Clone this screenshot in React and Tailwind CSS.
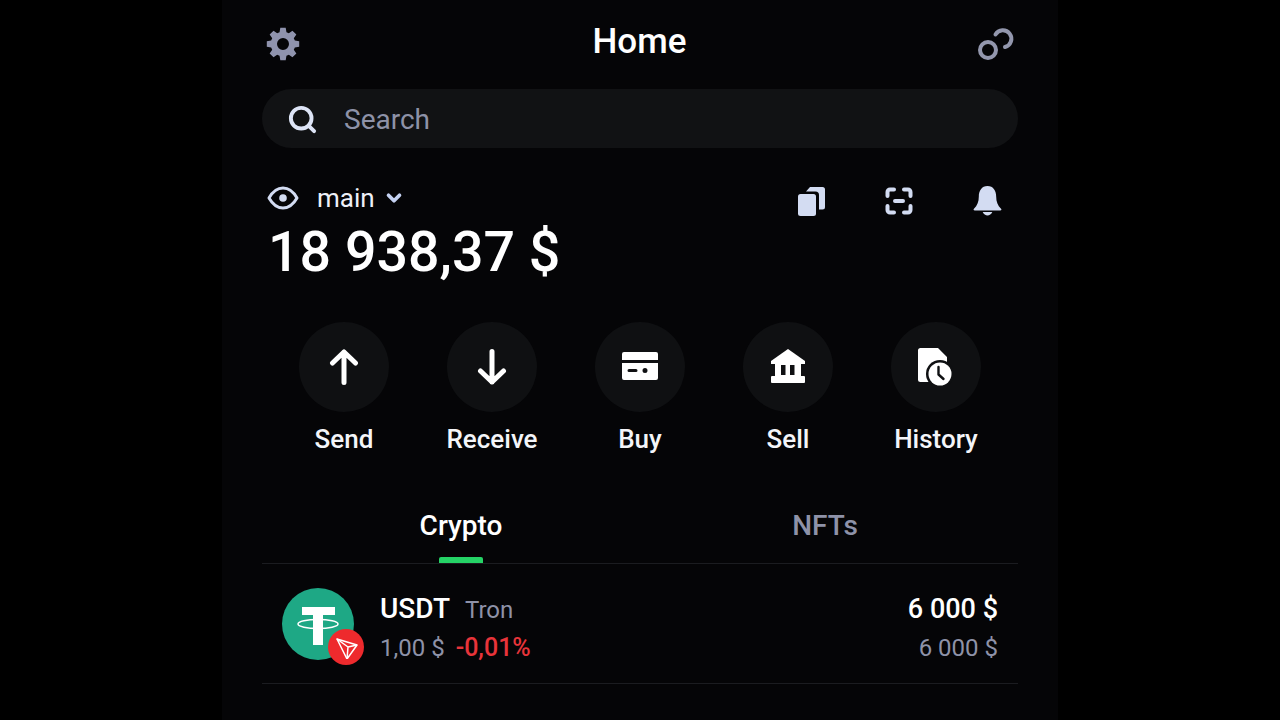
import React from "react";
import { Search, ChevronDown } from "lucide-react";

const font = { fontFamily: "Roboto, sans-serif" };

const GearIcon = () => (
  <svg width="36" height="36" viewBox="0 0 24 24" fill="#8f93ad">
    <path
      fillRule="evenodd"
      d="M10.2 1.200h3.600l.5 2.900 1.600.7 2.400-1.700 2.600 2.600-1.700 2.400.7 1.600 2.900.5v3.600l-2.900.5-.7 1.600 1.700 2.400-2.600 2.600-2.400-1.700-1.600.7-.5 2.900h-3.600l-.5-2.900-1.600-.7-2.400 1.700-2.600-2.600 1.700-2.400-.7-1.600-2.900-.5v-3.600l2.900-.5.7-1.600-1.700-2.400 2.600-2.600 2.400 1.700 1.600-.7zM12 8a4 4 0 1 0 0 8 4 4 0 0 0 0-8z"
    />
  </svg>
);

const LinkIcon = () => (
  <svg width="37" height="34" viewBox="0 0 37 34" fill="none" stroke="#9397ad" strokeWidth="4">
    <circle cx="10" cy="23" r="8" />
    <path d="M17.500 7.500A8.500 8.500 0 1 1 27 20" strokeLinecap="round" />
  </svg>
);

const EyeIcon = () => (
  <svg width="32" height="24" viewBox="0 0 32 24" fill="none" stroke="#d3dcf2" strokeWidth="3">
    <path d="M2 12C6 5 10 2 16 2s10 3 14 10c-4 7-8 10-14 10S6 19 2 12z" strokeLinejoin="round" />
    <circle cx="16" cy="12" r="3.800" fill="#d3dcf2" stroke="none" />
  </svg>
);

const CopyIcon = () => (
  <svg width="27" height="30" viewBox="0 0 27 30" fill="#d3dcf2">
    <rect x="0" y="8" width="18" height="22" rx="2.500" />
    <path d="M8 5.500 12 1h12.500A2.500 2.500 0 0 1 27 3.500v17.500a2.500 2.500 0 0 1-2.500 2.500H21V9a3.500 3.500 0 0 0-3.500-3.500z" />
  </svg>
);

const ScanIcon = () => (
  <svg width="28" height="28" viewBox="0 0 28 28" fill="none" stroke="#d3dcf2" strokeWidth="4" strokeLinecap="round" strokeLinejoin="round">
    <path d="M9 2.500H5A2.500 2.500 0 0 0 2.500 5v4M19 2.500h4A2.500 2.500 0 0 1 25.500 5v4M9 25.500H5A2.500 2.500 0 0 1 2.500 23v-4M19 25.500h4a2.500 2.500 0 0 0 2.500-2.500v-4M10 14h8" />
  </svg>
);

const BellIcon = () => (
  <svg width="29" height="31" viewBox="0 0 30 32" fill="#d3dcf2">
    <path d="M15 1C9 1 6 6 6 12c0 5-1.500 9-5 12.500-.8.8-.3 1.800.8 1.800h26.400c1.100 0 1.600-1 .8-1.800C25.500 21 24 17 24 12c0-6-3-11-9-11z" />
    <path d="M10 28h10c-1 2.500-3 3.500-5 3.500S11 30.500 10 28z" />
  </svg>
);

const UpIcon = () => (
  <svg width="30" height="38" viewBox="0 0 30 38" fill="none" stroke="#fff" strokeWidth="5" strokeLinecap="round" strokeLinejoin="round">
    <path d="M15 34.500V4M3.500 15 15 4l11.500 11" />
  </svg>
);

const DownIcon = () => (
  <svg width="30" height="38" viewBox="0 0 30 38" fill="none" stroke="#fff" strokeWidth="5" strokeLinecap="round" strokeLinejoin="round">
    <path d="M15 3.500V34M3.500 23 15 34l11.500-11" />
  </svg>
);

const CardIcon = () => (
  <svg width="38" height="30" viewBox="0 0 38 30" fill="#fff">
    <path d="M3 0h32a2 2 0 0 1 2 2v6H1V2a2 2 0 0 1 2-2z" />
    <path
      fillRule="evenodd"
      d="M1 11h36v15a2 2 0 0 1-2 2H3a2 2 0 0 1-2-2zm7 6a1.500 1.500 0 0 0 0 3h7a1.500 1.500 0 0 0 0-3zm16-1a2.500 2.500 0 1 0 0 5 2.500 2.500 0 0 0 0-5z"
    />
  </svg>
);

const BankIcon = () => (
  <svg width="36" height="36" viewBox="0 0 36 36" fill="#fff">
    <path d="M18 0 35 12v3H1v-3z" />
    <path fillRule="evenodd" d="M5 15h26v12H5zm6 1v10h4.500V16zm9 0v10h4.500V16z" />
    <rect x="1" y="27" width="34" height="7" rx="1" />
  </svg>
);

const HistoryIcon = () => (
  <svg width="38" height="38" viewBox="0 0 38 38" fill="none">
    <path d="M1 2.500A2.500 2.500 0 0 1 3.500 0H21l9 9v25H3.500A2.500 2.500 0 0 1 1 31.500z" fill="#fff" />
    <circle cx="23" cy="26" r="14" fill="#0f1012" />
    <circle cx="23" cy="26" r="11.500" fill="#fff" />
    <path d="M21.500 19v7.500l5 4.500" stroke="#0f1012" strokeWidth="2.400" strokeLinecap="round" strokeLinejoin="round" />
  </svg>
);

const TokenIcon = () => (
  <div className="relative h-[72px] w-[72px] shrink-0">
    <svg width="72" height="72" viewBox="0 0 72 72">
      <circle cx="36" cy="36" r="36" fill="#1ea885" />
      <path d="M20 19h33v8H41v30H31V27H20z" fill="#fff" />
      <ellipse cx="36" cy="36" rx="20" ry="4.500" fill="none" stroke="#fff" strokeWidth="1.500" />
    </svg>
    <div className="absolute left-[46px] top-[41px] flex h-[36px] w-[36px] items-center justify-center rounded-full bg-[#ee2a2d]">
      <svg width="24" height="24" viewBox="0 0 24 24" fill="none" stroke="#fff" strokeWidth="1.500" strokeLinejoin="round">
        <path d="M3 4 23 10 13 24z" />
        <path d="M3 4 14 12 13 24M14 12 23 10" />
      </svg>
    </div>
  </div>
);

const actions = [
  { label: "Send", icon: <UpIcon /> },
  { label: "Receive", icon: <DownIcon /> },
  { label: "Buy", icon: <CardIcon /> },
  { label: "Sell", icon: <BankIcon /> },
  { label: "History", icon: <HistoryIcon /> },
];

export default function App() {
  return (
    <div className="flex h-[720px] w-full justify-center overflow-hidden bg-black" style={font}>
      <div className="w-[836px] bg-[#050507] px-[40px]">
        {/* header */}
        <div className="flex h-[89px] items-start justify-between px-[3px] pt-[23px]">
          <div className="pt-[3px]">
            <GearIcon />
          </div>
          <h1 className="text-[35px] font-medium leading-[38px] text-white">Home</h1>
          <div className="pt-[4px]">
            <LinkIcon />
          </div>
        </div>

        {/* search */}
        <div className="flex h-[59px] items-center rounded-full bg-[#111214] pl-[25px]">
          <Search size={31} color="#dde4f6" strokeWidth={3} className="mt-[1px]" />
          <span className="ml-[26px] mt-[3px] text-[28px] text-[#8e92a8]">Search</span>
        </div>

        {/* balance */}
        <div className="flex items-start justify-between pl-[5px] pr-[16px] pt-[36px]">
          <div>
            <div className="flex h-[28px] items-center">
              <EyeIcon />
              <span className="ml-[18px] text-[26px] text-[#eef0f7]">main</span>
              <ChevronDown size={22} color="#c5d2f2" strokeWidth={4} className="ml-[8px]" />
            </div>
            <div className="mt-[9px] pl-[1px] text-[55.5px] font-medium leading-[64px] text-white">18 938,37 $</div>
          </div>
          <div className="flex items-center gap-[60px] pt-[1px]">
            <CopyIcon />
            <ScanIcon />
            <BellIcon />
          </div>
        </div>

        {/* actions */}
        <div className="mt-[37px] flex justify-between px-[37px]">
          {actions.map((a) => (
            <div key={a.label} className="flex w-[90px] flex-col items-center">
              <div className="flex h-[90px] w-[90px] items-center justify-center rounded-full bg-[#0f1012]">{a.icon}</div>
              <span className="mt-[11px] whitespace-nowrap text-[26px] font-medium leading-[32px] text-[#f4f5f9]">{a.label}</span>
            </div>
          ))}
        </div>

        {/* tabs */}
        <div className="mt-[55px] flex h-[54px] border-b border-[#1b1c20] pl-[17px]">
          <div className="relative flex h-[53px] w-[364px] justify-center">
            <span className="text-[28px] font-medium leading-[32px] text-white">Crypto</span>
            <div className="absolute bottom-0 left-[160px] h-[6px] w-[44px] rounded-t-[2px] bg-[#25d366]" />
          </div>
          <div className="flex w-[364px] justify-center">
            <span className="text-[28px] font-medium leading-[32px] text-[#8e92a8]">NFTs</span>
          </div>
        </div>

        {/* token row */}
        <div className="flex h-[120px] items-center border-b border-[#1b1c20] px-[20px]">
          <TokenIcon />
          <div className="ml-[26px] flex-1 pt-[9px]">
            <div className="flex items-baseline">
              <span className="text-[28px] font-medium leading-[39px] text-white">USDT</span>
              <span className="ml-[15px] text-[24px] text-[#8e92a8]">Tron</span>
            </div>
            <div className="flex items-baseline leading-[39px]">
              <span className="text-[24px] text-[#8e92a8]">1,00 $</span>
              <span className="ml-[11px] text-[25px] font-medium text-[#e8343a]">-0,01%</span>
            </div>
          </div>
          <div className="pt-[11px] text-right">
            <div className="text-[27px] font-medium leading-[39px] text-white">6 000 $</div>
            <div className="text-[24px] leading-[39px] text-[#8e92a8]">6 000 $</div>
          </div>
        </div>
      </div>
    </div>
  );
}
